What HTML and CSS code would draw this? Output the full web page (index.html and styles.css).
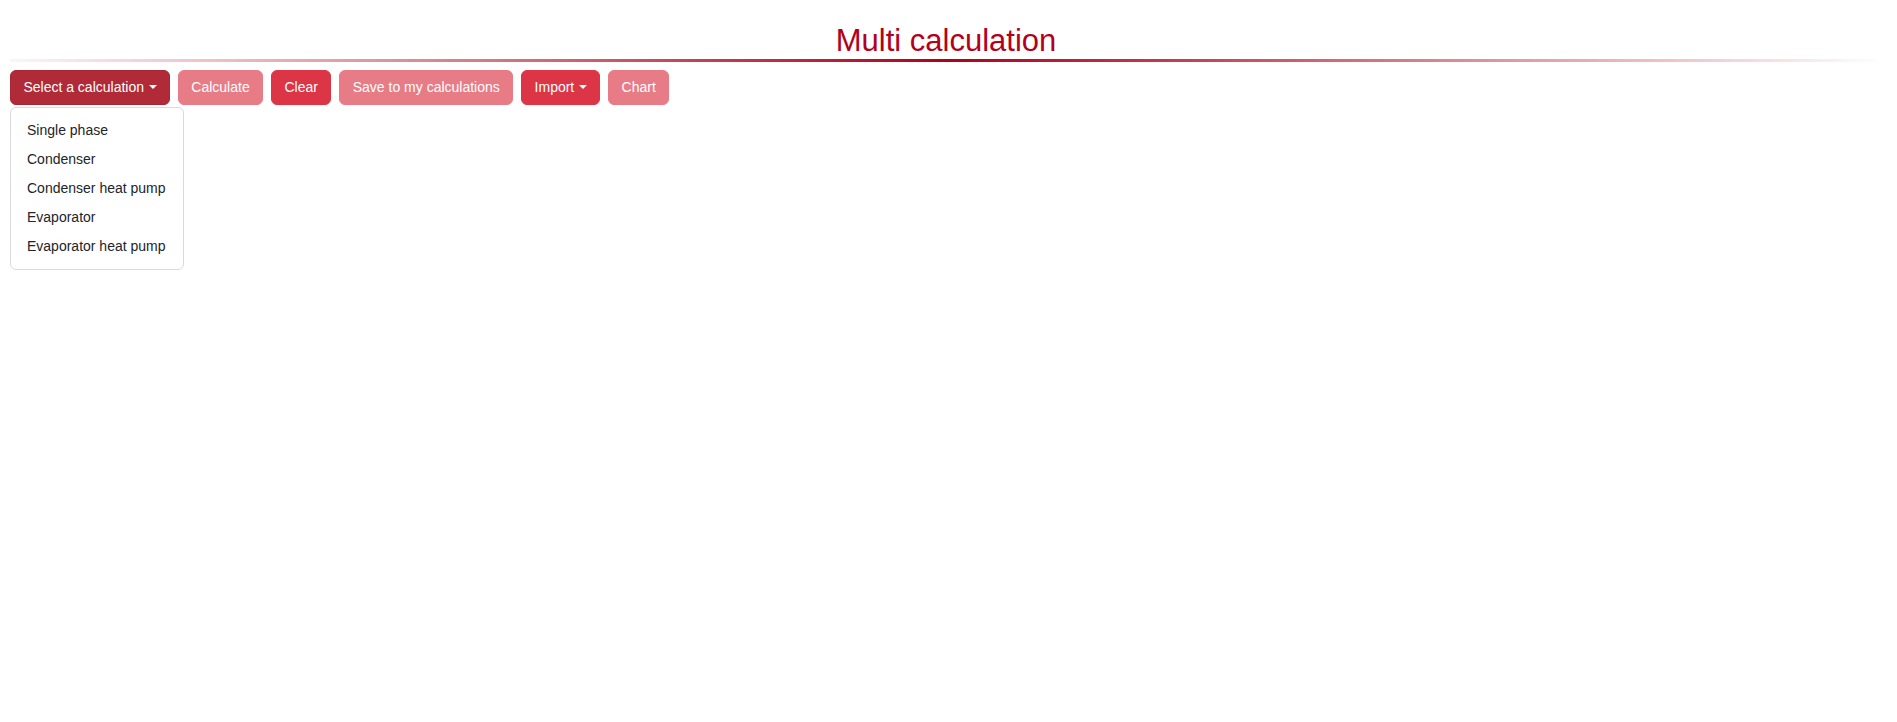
FILE: index.html
```html
<!DOCTYPE html>
<html lang="en">
<head>
<meta charset="utf-8">
<title>Multi calculation</title>
<link rel="stylesheet" href="styles.css">
</head>
<body>
<main class="page">
  <h1 class="title">Multi calculation</h1>
  <div class="rule"></div>
  <div class="toolbar">
    <button class="btn btn-active">Select a calculation<span class="caret"></span></button>
    <button class="btn btn-disabled">Calculate</button>
    <button class="btn btn-danger">Clear</button>
    <button class="btn btn-disabled">Save to my calculations</button>
    <button class="btn btn-danger">Import<span class="caret"></span></button>
    <button class="btn btn-disabled">Chart</button>
  </div>
  <div class="calc-list">
    <div class="calc-item">Single phase</div>
    <div class="calc-item">Condenser</div>
    <div class="calc-item">Condenser heat pump</div>
    <div class="calc-item">Evaporator</div>
    <div class="calc-item">Evaporator heat pump</div>
  </div>
</main>
</body>
</html>
```

FILE: styles.css
```css
html, body {
  margin: 0;
  padding: 0;
  background: #ffffff;
}

body {
  font-family: "Liberation Sans", Arial, sans-serif;
  color: #212529;
}

.page {
  padding: 22px 10px 0 10px;
}

.title {
  margin: 0;
  padding-right: 5px;
  text-align: center;
  font-size: 31px;
  font-weight: 400;
  line-height: 37px;
  color: #b3001b;
}

.rule {
  height: 3px;
  background: linear-gradient(90deg, rgba(179, 0, 27, 0.04) 0%, #b0001a 50%, rgba(179, 0, 27, 0) 100%);
}

.toolbar {
  display: flex;
  align-items: flex-start;
  gap: 8px;
  margin-top: 8px;
}

.btn {
  display: inline-flex;
  align-items: center;
  height: 35px;
  box-sizing: border-box;
  padding: 6px 12.4px;
  border: 1px solid transparent;
  border-radius: 6px;
  font-family: "Liberation Sans", Arial, sans-serif;
  font-size: 14px;
  line-height: 21px;
  color: #ffffff;
  cursor: pointer;
  white-space: nowrap;
}

.btn-active {
  background: #b02a37;
  border-color: #a52834;
}

.btn-danger {
  background: #dc3545;
  border-color: #dc3545;
}

.btn-disabled {
  background: #e87c86;
  border-color: #e87c86;
  cursor: default;
}

.caret {
  display: inline-block;
  width: 0;
  height: 0;
  margin-left: 4.5px;
  margin-top: -1px;
  border-top: 4px solid #ffffff;
  border-left: 4px solid transparent;
  border-right: 4px solid transparent;
}

.calc-list {
  width: fit-content;
  margin-top: 2px;
  padding: 8px 0;
  background: #ffffff;
  border: 1px solid #d9dadb;
  border-radius: 6px;
}

.calc-item {
  padding: 4px 17.5px 4px 16px;
  font-size: 14px;
  line-height: 21px;
  color: #212529;
  white-space: nowrap;
}
```
